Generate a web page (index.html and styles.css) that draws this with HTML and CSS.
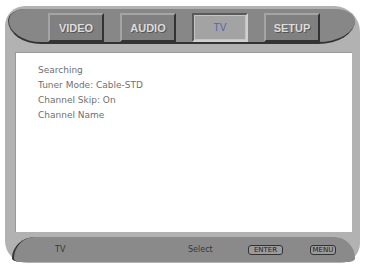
FILE: index.html
```html
<!DOCTYPE html>
<html lang="en">
<head>
    <meta charset="UTF-8">
    <title>TV Menu</title>
    <link rel="stylesheet" href="styles.css">
</head>
<body>
<div class="tv">
    <div class="topbar">
        <div class="tab">VIDEO</div>
        <div class="tab">AUDIO</div>
        <div class="tab active">TV</div>
        <div class="tab">SETUP</div>
    </div>
    <div class="screen">
        <p>Searching</p>
        <p>Tuner Mode: Cable-STD</p>
        <p>Channel Skip: On</p>
        <p>Channel Name</p>
    </div>
    <div class="bottombar">
        <span class="source">TV</span>
        <span class="hint">Select</span>
        <span class="key enter">ENTER</span>
        <span class="key menu">MENU</span>
    </div>
</div>
</body>
</html>
```

FILE: styles.css
```css
* {
    box-sizing: border-box;
}
body {
    margin: 0;
    background-color: #fff;
    font-family: "DejaVu Sans", sans-serif;
}
.tv {
    margin: 6px 0 0 5px;
    width: 355px;
    height: 257px;
    background-color: #b2b2b2;
    border-radius: 20px 26px 20px 22px;
    padding: 3px 5px 1px 3px;
    display: flex;
    flex-direction: column;
}
.topbar {
    height: 35px;
    background-color: #878787;
    border-bottom: 2px solid #333;
    border-left: 1px solid #444;
    border-radius: 18px 20px 38px 34px / 12px 12px 24px 24px;
    display: flex;
    align-items: flex-start;
    gap: 16px;
    padding: 4px 0 0 39px;
}
.tab {
    width: 56px;
    height: 29px;
    background-color: #808080;
    border: 2px solid;
    border-color: #a4a4a4 #333 #333 #a4a4a4;
    color: #dcdcdc;
    font-family: "Liberation Sans", sans-serif;
    font-weight: bold;
    font-size: 11px;
    text-shadow: 1px 1px 0 #555;
    display: flex;
    align-items: center;
    justify-content: center;
}
.tab.active {
    background-color: #a3a3a3;
    border-color: #5a5a5a #d0d0d0 #d0d0d0 #5a5a5a;
    box-shadow: inset 0 0 0 1px #c4c4c4;
    color: #5565b0;
    font-weight: normal;
    font-size: 10px;
    text-shadow: none;
}
.screen {
    flex: 1;
    margin: 8px 3px 0 7px;
    background-color: #fff;
    border-top: 1px solid #999;
    border-left: 1px solid #999;
    padding: 10px 0 0 22px;
    font-size: 9px;
    color: #707070;
    line-height: 15px;
}
.screen p {
    margin: 0;
}
.bottombar {
    height: 25px;
    margin: 5px 0 0 4px;
    background-color: #8a8a8a;
    border-left: 2px solid #333;
    border-radius: 24px 22px 6px 8px / 22px 22px 4px 4px;
    display: grid;
    grid-template-columns: 133px 60px 62px auto;
    align-items: center;
    padding-left: 41px;
    font-size: 8px;
    color: #383838;
}
.key {
    justify-self: start;
    border: 1px solid #333;
    border-radius: 3px;
    background-color: #9a9a9a;
    height: 10px;
    line-height: 8px;
    font-size: 7px;
    color: #222;
    text-align: center;
}
.key.enter {
    width: 35px;
}
.key.menu {
    width: 26px;
}
```
